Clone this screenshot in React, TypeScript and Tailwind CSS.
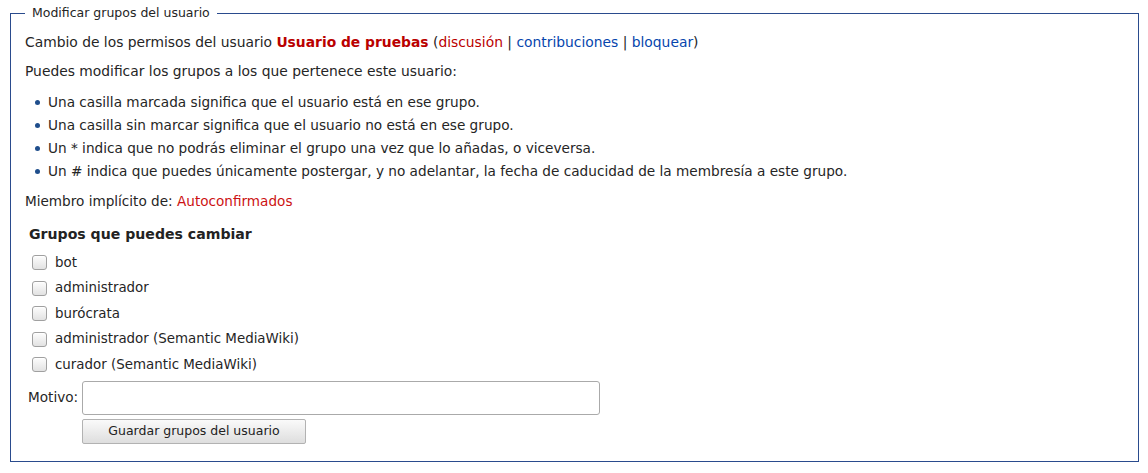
const groups = [
  "bot",
  "administrador",
  "burócrata",
  "administrador (Semantic MediaWiki)",
  "curador (Semantic MediaWiki)",
];

const notes = [
  "Una casilla marcada significa que el usuario está en ese grupo.",
  "Una casilla sin marcar significa que el usuario no está en ese grupo.",
  "Un * indica que no podrás eliminar el grupo una vez que lo añadas, o viceversa.",
  "Un # indica que puedes únicamente postergar, y no adelantar, la fecha de caducidad de la membresía a este grupo.",
];

function Checkbox() {
  return (
    <span className="inline-block h-[15px] w-[15px] shrink-0 rounded-[3px] border border-[#a0a0a0] bg-gradient-to-b from-[#fdfdfd] to-[#e2e2e2] shadow-[inset_0_1px_0_#fff]" />
  );
}

export default function App() {
  return (
    <div className="bg-white pt-[3px] text-[14px] text-[#252525]" style={{ fontFamily: '"DejaVu Sans", "Noto Sans", sans-serif' }}>
      <fieldset className="ml-[10px] w-[1129px] border border-[#2a4b8d] pb-[17px] pl-[14px] pr-[14px] pt-[8px]">
        <legend className="px-[7px] text-[12.5px] leading-[20px] text-[#252525]">Modificar grupos del usuario</legend>

        <p className="text-[13.85px] leading-[22px]">
          Cambio de los permisos del usuario{" "}
          <span className="font-bold text-[#ba0000]">Usuario de pruebas</span> (
          <span className="text-[#ba0000]">discusión</span> |{" "}
          <span className="text-[#0645ad]">contribuciones</span> |{" "}
          <span className="text-[#0645ad]">bloquear</span>)
        </p>

        <p className="mt-[7px] text-[13.85px] leading-[22px]">Puedes modificar los grupos a los que pertenece este usuario:</p>

        <ul className="mt-[9px] text-[13.65px]">
          {notes.map((note) => (
            <li key={note} className="flex items-center leading-[23px]">
              <span className="ml-[10px] mr-[8px] inline-block h-[5px] w-[5px] rounded-full bg-[#1f4e8c]" />
              {note}
            </li>
          ))}
        </ul>

        <p className="mt-[7px] text-[13.6px] leading-[22px]">
          Miembro implícito de: <span className="text-[#cc1111]">Autoconfirmados</span>
        </p>

        <h4 className="ml-[4px] mt-[11px] text-[14.1px] font-bold leading-[22px] text-[#222]">Grupos que puedes cambiar</h4>

        <div className="ml-[7px] mt-[5px] text-[13.4px]">
          {groups.map((g) => (
            <label key={g} className="flex h-[25.5px] items-center gap-[8px]">
              <Checkbox />
              {g}
            </label>
          ))}
        </div>

        <div className="mt-[3px] flex items-center">
          <span className="ml-[3px] w-[54px] text-[13.6px]">Motivo:</span>
          <input className="h-[34px] w-[518px] rounded-[3px] border border-[#aaaaaa] bg-white px-2 outline-none" />
        </div>

        <div className="mt-[4px] pl-[57px]">
          <button className="h-[25px] w-[224px] rounded-[2px] border border-[#b2b2b2] bg-gradient-to-b from-[#fafafa] to-[#dedede] text-[12.5px] text-[#222]">
            Guardar grupos del usuario
          </button>
        </div>
      </fieldset>
    </div>
  );
}
